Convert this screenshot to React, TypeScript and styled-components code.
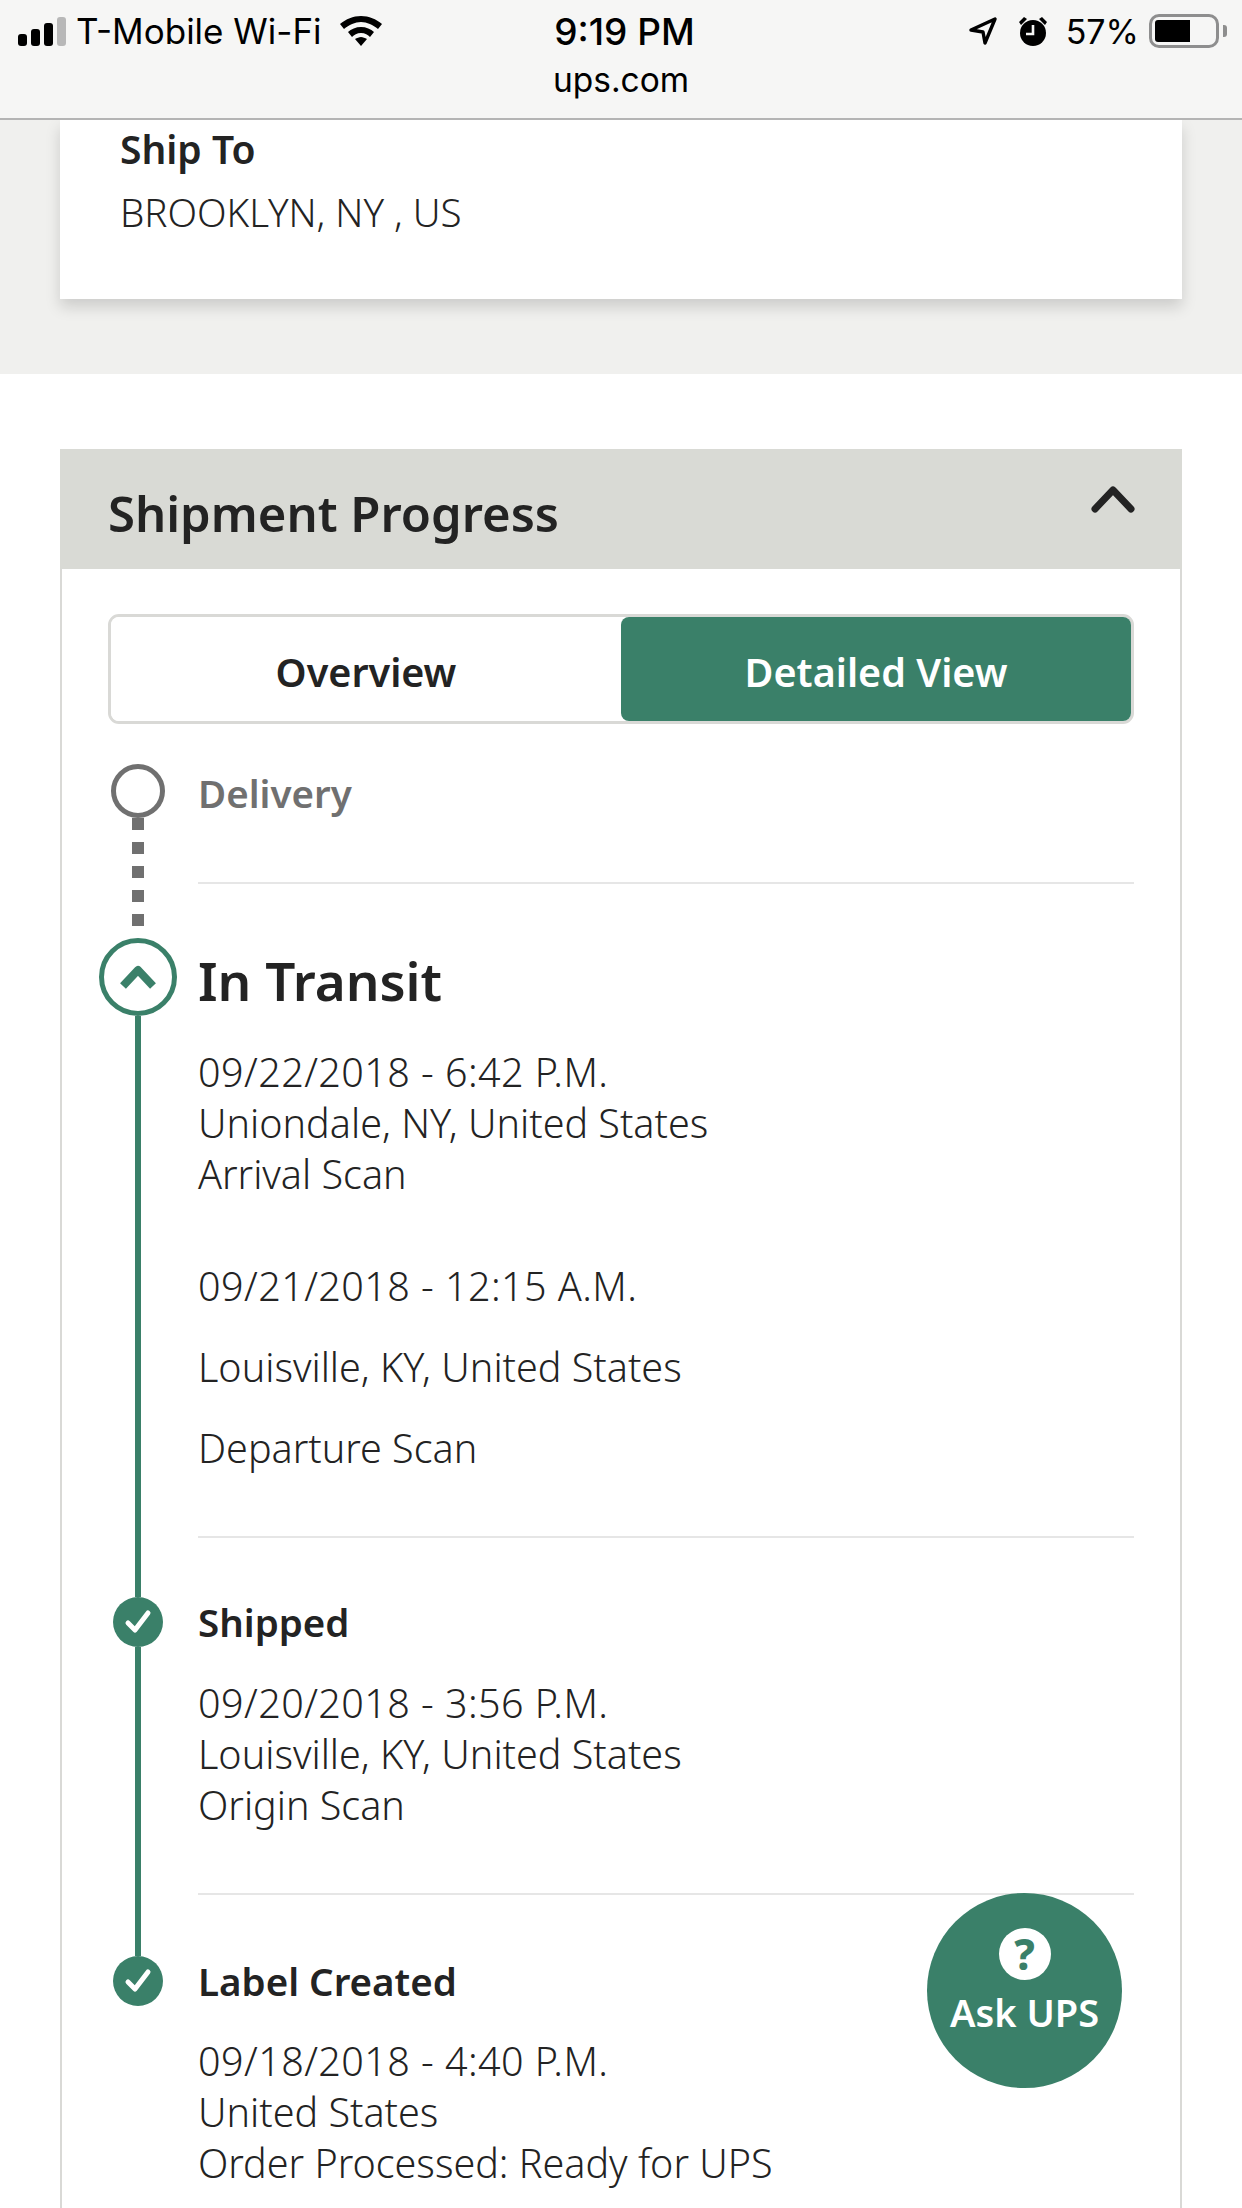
import React from 'react'
import styled, { createGlobalStyle } from 'styled-components'

const GREEN = '#3a8069'
const INK = '#232323'
const SANS = '"Noto Sans", "Open Sans", sans-serif'
const IOS = 'Inter, "Liberation Sans", sans-serif'

const Global = createGlobalStyle`
	html, body {
		margin: 0;
		background: #fff;
	}
	* {
		box-sizing: border-box;
	}
`

const Page = styled.div`
	position: relative;
	width: 1242px;
	height: 2208px;
	overflow: hidden;
	background: #fff;
	font-family: ${SANS};
	color: ${INK};
`

const StatusBar = styled.header`
	position: relative;
	z-index: 2;
	height: 120px;
	background: #f6f6f5;
	border-bottom: 2px solid #b4b4b4;
	font-family: ${IOS};
	color: #000;
`

const StatusRow = styled.div`
	display: grid;
	grid-template-columns: 1fr auto 1fr;
	align-items: center;
	height: 62px;
	padding: 0 15px 0 18px;
`

const StatusLeft = styled.div`
	display: flex;
	align-items: center;
	gap: 10px;
`

const StatusRight = styled.div`
	display: flex;
	align-items: center;
	justify-content: flex-end;
	gap: 21px;
`

const Carrier = styled.span`
	font-size: 35px;
	font-weight: 400;
`

const Clock = styled.span`
	margin-left: 4px;
	font-size: 37px;
	font-weight: 500;
`

const Percent = styled.span`
	margin: 0 -11px 0 -3px;
	font-size: 34px;
	font-weight: 400;
`

const Url = styled.div`
	text-align: center;
	font-size: 33.5px;
	line-height: 40px;
	margin-top: -2px;
`

const Signal = styled.div`
	display: flex;
	align-items: flex-end;
	gap: 4px;
	height: 29px;
`

const Bar = styled.span<{ $h: number; $off?: boolean }>`
	width: 9px;
	height: ${p => p.$h}px;
	border-radius: 3px;
	background: ${p => (p.$off ? '#b8b8b8' : '#000')};
`

const Battery = styled.div`
	display: flex;
	align-items: center;
	gap: 4px;
`

const BatteryShell = styled.div`
	width: 70px;
	height: 34px;
	padding: 3px;
	border: 3px solid #8e8e8e;
	border-radius: 10px;
`

const BatteryFill = styled.div`
	width: 35px;
	height: 22px;
	border-radius: 3px 0 0 3px;
	background: #000;
`

const BatteryNub = styled.div`
	width: 4px;
	height: 12px;
	border-radius: 0 3px 3px 0;
	background: #8e8e8e;
`

const SummaryBand = styled.section`
	padding: 0 60px 75px 60px;
	background: #f0f0ee;
`

const SummaryCard = styled.div`
	height: 179px;
	padding: 5px 60px 0;
	background: #fff;
	box-shadow: 0 8px 14px rgba(0, 0, 0, 0.15);
`

const ShipLabel = styled.div`
	font-size: 39px;
	font-weight: 600;
	line-height: 48px;
`

const ShipValue = styled.div`
	font-size: 38.5px;
	font-weight: 300;
	line-height: 48px;
	margin-top: 15px;
`

const Main = styled.main`
	padding: 75px 60px 0 60px;
`

const PanelHeader = styled.div`
	display: flex;
	justify-content: space-between;
	height: 120px;
	padding: 35px 47px 0 48px;
	background: #d9dad5;
`

const PanelTitle = styled.h2`
	margin: 0;
	font-size: 49px;
	font-weight: 600;
	line-height: 58px;
`

const PanelBody = styled.div`
	padding: 45px 46px 0;
	border: solid #d9d9d6;
	border-width: 0 2px;
`

const Toggle = styled.div`
	display: grid;
	grid-template-columns: 1fr 1fr;
	height: 110px;
	border: 3px solid #d9d9d6;
	border-radius: 11px;
`

const ToggleOption = styled.div<{ $active?: boolean }>`
	display: flex;
	align-items: center;
	justify-content: center;
	padding-top: 6px;
	border-radius: 8px;
	font-size: 39.5px;
	font-weight: 600;
	background: ${p => (p.$active ? GREEN : '#fff')};
	color: ${p => (p.$active ? '#fff' : INK)};
`

const Step = styled.div`
	display: flex;
`

const Rail = styled.div<{ $top?: number }>`
	display: flex;
	flex: none;
	flex-direction: column;
	align-items: center;
	width: 59px;
	padding-top: ${p => p.$top ?? 0}px;
`

const PendingDot = styled.div`
	flex: none;
	width: 54px;
	height: 54px;
	border: 5px solid #707070;
	border-radius: 50%;
`

const DottedLine = styled.div`
	flex: 1;
	width: 12px;
	background: repeating-linear-gradient(to bottom, #707070 0 12px, transparent 12px 24px);
`

const SolidLine = styled.div`
	flex: 1;
	width: 6px;
	background: ${GREEN};
`

const CurrentDot = styled.div`
	display: flex;
	flex: none;
	align-items: center;
	justify-content: center;
	width: 78px;
	height: 78px;
	border: 5px solid ${GREEN};
	border-radius: 50%;
`

const DoneDot = styled.div`
	display: flex;
	flex: none;
	align-items: center;
	justify-content: center;
	width: 50px;
	height: 50px;
	border-radius: 50%;
	background: ${GREEN};
`

const StepContent = styled.div<{ $top?: number; $bottom: number }>`
	flex: 1;
	min-width: 0;
	margin-left: 31px;
	padding-top: ${p => p.$top ?? 0}px;
	padding-bottom: ${p => p.$bottom}px;
`

const StepTitle = styled.div<{ $muted?: boolean }>`
	font-size: 38.5px;
	font-weight: 600;
	line-height: 50px;
	color: ${p => (p.$muted ? '#707070' : INK)};
`

const CurrentTitle = styled.div`
	font-size: 53px;
	font-weight: 600;
	line-height: 60px;
`

const EventBlock = styled.div<{ $top: number; $gap: number }>`
	display: flex;
	flex-direction: column;
	gap: ${p => p.$gap}px;
	margin-top: ${p => p.$top}px;
`

const EventLine = styled.div<{ $date?: boolean }>`
	font-size: 39.5px;
	font-weight: 300;
	line-height: 51px;
	letter-spacing: ${p => (p.$date ? 0.45 : 0)}px;
	white-space: nowrap;
`

const Divider = styled.hr<{ $top: number }>`
	height: 2px;
	margin: ${p => p.$top}px 0 0;
	border: 0;
	background: #e6e6e6;
`

const AskButton = styled.div`
	position: absolute;
	top: 1893px;
	left: 927px;
	display: flex;
	flex-direction: column;
	align-items: center;
	width: 195px;
	height: 195px;
	padding-top: 35px;
	border-radius: 50%;
	background: ${GREEN};
	color: #fff;
`

const AskMark = styled.div`
	display: flex;
	align-items: center;
	justify-content: center;
	width: 52px;
	height: 52px;
	border-radius: 50%;
	background: #fff;
	color: ${GREEN};
	font-size: 42px;
	font-weight: 800;
	line-height: 1;
`

const AskLabel = styled.div`
	margin-top: 7px;
	font-size: 38px;
	font-weight: 600;
	line-height: 50px;
`

const Check = () => (
	<svg width="32" height="28" viewBox="0 0 32 28" fill="none">
		<path d="M6 15l7 7L26 5" stroke="#fff" strokeWidth="5" strokeLinecap="round" strokeLinejoin="round" />
	</svg>
)

function Event({ lines, top, gap = 0 }: { lines: string[]; top: number; gap?: number }) {
	return (
		<EventBlock $top={top} $gap={gap}>
			{lines.map((line, i) => (
				<EventLine key={line} $date={i === 0}>
					{line}
				</EventLine>
			))}
		</EventBlock>
	)
}

export default function App() {
	return (
		<Page>
			<Global />
			<StatusBar>
				<StatusRow>
					<StatusLeft>
						<Signal>
							<Bar $h={12} />
							<Bar $h={17} />
							<Bar $h={23} />
							<Bar $h={29} $off />
						</Signal>
						<Carrier>T-Mobile Wi-Fi</Carrier>
						<svg width="42" height="30" viewBox="0 0 42 30" style={{ marginLeft: 8 }}>
							<path d="M21 0C13 0 6 3 0 8l4 5c5-4 11-7 17-7s12 3 17 7l4-5C36 3 29 0 21 0z" />
							<path d="M21 11c-5 0-10 2-13 5l4 5c2-2 5-4 9-4s7 2 9 4l4-5c-3-3-8-5-13-5z" />
							<path d="M21 21c-2 0-4 1-6 2l6 7 6-7c-2-1-4-2-6-2z" />
						</svg>
					</StatusLeft>
					<Clock>9:19 PM</Clock>
					<StatusRight>
						<svg width="28" height="28" viewBox="0 0 28 28" fill="none">
							<path d="M2 13L26 2 16 26l-2-11z" stroke="#000" strokeWidth="3.4" strokeLinejoin="round" />
						</svg>
						<svg width="30" height="30" viewBox="0 0 30 30">
							<path d="M1 6l5-5 3 2-6 6zM29 6l-5-5-3 2 6 6z" />
							<circle cx="15" cy="17" r="13" />
							<path d="M15 9v9H8" fill="none" stroke="#f6f6f5" strokeWidth="2.6" />
						</svg>
						<Percent>57%</Percent>
						<Battery>
							<BatteryShell>
								<BatteryFill />
							</BatteryShell>
							<BatteryNub />
						</Battery>
					</StatusRight>
				</StatusRow>
				<Url>ups.com</Url>
			</StatusBar>

			<SummaryBand>
				<SummaryCard>
					<ShipLabel>Ship To</ShipLabel>
					<ShipValue>BROOKLYN, NY , US</ShipValue>
				</SummaryCard>
			</SummaryBand>

			<Main>
				<PanelHeader>
					<PanelTitle>Shipment Progress</PanelTitle>
					<svg width="44" height="30" viewBox="0 0 44 30" fill="none">
						<path d="M4 25L22 6l18 19" stroke={INK} strokeWidth="7" strokeLinecap="round" strokeLinejoin="round" />
					</svg>
				</PanelHeader>
				<PanelBody>
					<Toggle>
						<ToggleOption>Overview</ToggleOption>
						<ToggleOption $active>Detailed View</ToggleOption>
					</Toggle>

					<Step>
						<Rail $top={40}>
							<PendingDot />
							<DottedLine />
						</Rail>
						<StepContent $top={44} $bottom={54}>
							<StepTitle $muted>Delivery</StepTitle>
							<Divider $top={64} />
						</StepContent>
					</Step>

					<Step>
						<Rail>
							<CurrentDot>
								<svg width="40" height="28" viewBox="0 0 40 28" fill="none">
									<path d="M5 23L20 7l15 16" stroke={GREEN} strokeWidth="8" strokeLinejoin="round" />
								</svg>
							</CurrentDot>
							<SolidLine />
						</Rail>
						<StepContent $top={13} $bottom={59}>
							<CurrentTitle>In Transit</CurrentTitle>
							<Event
								top={36}
								lines={['09/22/2018 - 6:42 P.M.', 'Uniondale, NY, United States', 'Arrival Scan']}
							/>
							<Event
								top={61}
								gap={30}
								lines={['09/21/2018 - 12:15 A.M.', 'Louisville, KY, United States', 'Departure Scan']}
							/>
							<Divider $top={62} />
						</StepContent>
					</Step>

					<Step>
						<Rail>
							<DoneDot>
								<Check />
							</DoneDot>
							<SolidLine />
						</Rail>
						<StepContent $bottom={61}>
							<StepTitle>Shipped</StepTitle>
							<Event
								top={31}
								lines={['09/20/2018 - 3:56 P.M.', 'Louisville, KY, United States', 'Origin Scan']}
							/>
							<Divider $top={62} />
						</StepContent>
					</Step>

					<Step>
						<Rail>
							<DoneDot>
								<Check />
							</DoneDot>
						</Rail>
						<StepContent $bottom={60}>
							<StepTitle>Label Created</StepTitle>
							<Event
								top={30}
								lines={['09/18/2018 - 4:40 P.M.', 'United States', 'Order Processed: Ready for UPS']}
							/>
						</StepContent>
					</Step>
				</PanelBody>
			</Main>

			<AskButton>
				<AskMark>?</AskMark>
				<AskLabel>Ask UPS</AskLabel>
			</AskButton>
		</Page>
	)
}
